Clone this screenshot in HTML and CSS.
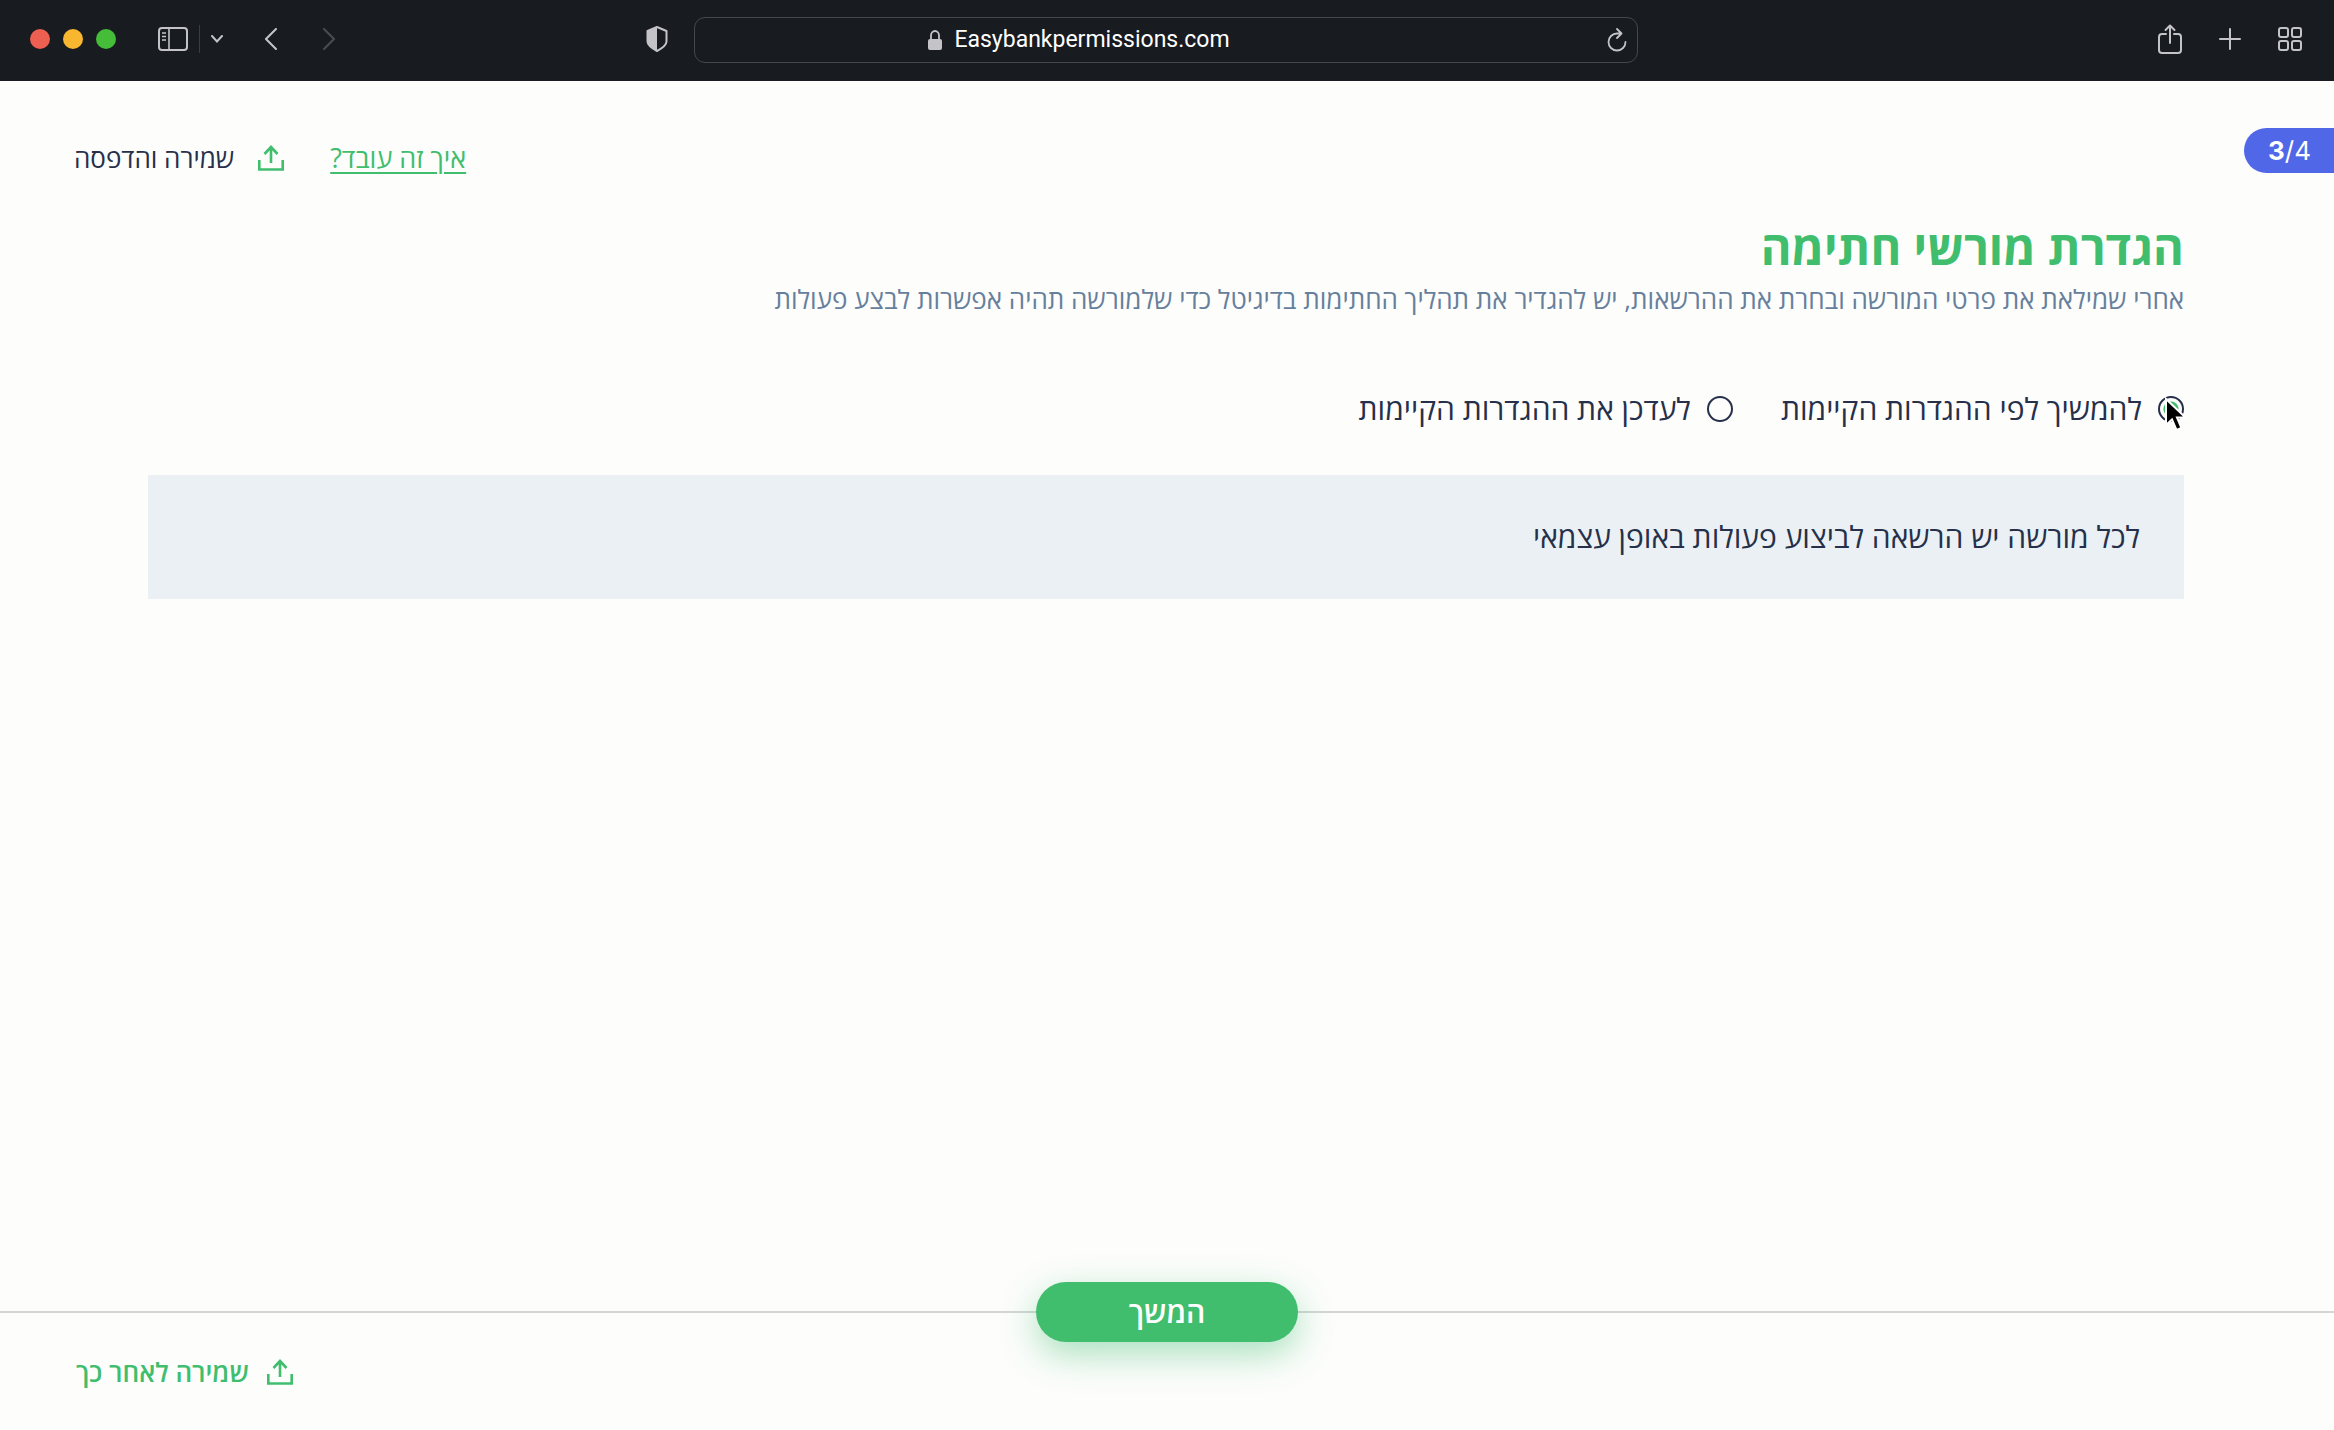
FILE: index.html
```html
<!DOCTYPE html>
<html lang="he" dir="rtl">
<head>
<meta charset="utf-8">
<meta name="viewport" content="width=device-width, initial-scale=1">
<title>הגדרת מורשי חתימה</title>
<link rel="stylesheet" href="styles.css">
</head>
<body>
<header class="browser" dir="ltr">
  <div class="browser-side">
    <div class="lights"><span class="light light-red"></span><span class="light light-yellow"></span><span class="light light-green"></span></div>
    <div class="sidebar-tools">
      <button class="tool" type="button" aria-label="Sidebar">
        <svg width="30" height="24" viewBox="0 0 30 24" fill="none" stroke="currentColor" stroke-width="2"><rect x="1" y="1" width="28" height="22" rx="3"/><path d="M11 1v22M4 6h4M4 9.500h4M4 13h4" stroke-width="1.600"/></svg>
      </button>
      <span class="divider"></span>
      <button class="tool" type="button" aria-label="Tab groups">
        <svg width="12" height="8" viewBox="0 0 12 8" fill="none" stroke="currentColor" stroke-width="2" stroke-linecap="round"><path d="M1 1l5 5.500L11 1"/></svg>
      </button>
    </div>
    <div class="history">
      <button class="tool" type="button" aria-label="Back"><svg width="12" height="22" viewBox="0 0 12 22" fill="none" stroke="currentColor" stroke-width="2" stroke-linecap="round"><path d="M11 1L1 11l10 10"/></svg></button>
      <button class="tool tool-dim" type="button" aria-label="Forward"><svg width="12" height="22" viewBox="0 0 12 22" fill="none" stroke="currentColor" stroke-width="2" stroke-linecap="round"><path d="M1 1l10 10L1 21"/></svg></button>
    </div>
    <button class="tool shield" type="button" aria-label="Privacy report">
      <svg width="22" height="26" viewBox="0 0 22 26"><path d="M11 1l9.500 4v10.500c0 3.500-4 6.500-9.500 9.500-5.500-3-9.500-6-9.500-9.500V5z" fill="none" stroke="currentColor" stroke-width="2" stroke-linejoin="round"/><path d="M11 1L1.500 5v10.500c0 3.500 4 6.500 9.500 9.500z" fill="currentColor"/></svg>
    </button>
  </div>
  <div class="address">
    <div class="address-text">
      <svg width="14" height="20" viewBox="0 0 14 20"><rect x="0" y="9" width="14" height="11" rx="2" fill="currentColor"/><path d="M3 10V5.500a4 4.500 0 0 1 8 0V10" fill="none" stroke="currentColor" stroke-width="1.800"/></svg>
      <span class="url">Easybankpermissions.com</span>
    </div>
    <button class="tool" type="button" aria-label="Reload">
      <svg width="20" height="24" viewBox="0 0 20 24" fill="none" stroke="currentColor" stroke-width="1.800" stroke-linecap="round" stroke-linejoin="round"><path d="M18.500 14a8.500 8.500 0 1 1-8.500-8.500h4M10 1l4.500 4.500L10 10"/></svg>
    </button>
  </div>
  <div class="browser-side browser-end">
    <button class="tool" type="button" aria-label="Share"><svg width="24" height="30" viewBox="0 0 24 30" fill="none" stroke="currentColor" stroke-width="2" stroke-linecap="round" stroke-linejoin="round"><path d="M8 10H4a3 3 0 0 0-3 3v13a3 3 0 0 0 3 3h16a3 3 0 0 0 3-3V13a3 3 0 0 0-3-3h-4M12 19V1.500M7.500 6L12 1.500 16.500 6"/></svg></button>
    <button class="tool" type="button" aria-label="New tab"><svg width="22" height="22" viewBox="0 0 22 22" fill="none" stroke="currentColor" stroke-width="2" stroke-linecap="round"><path d="M11 1v20M1 11h20"/></svg></button>
    <button class="tool" type="button" aria-label="All tabs"><svg width="24" height="24" viewBox="0 0 24 24" fill="none" stroke="currentColor" stroke-width="2"><rect x="1" y="1" width="9" height="9" rx="2"/><rect x="14" y="1" width="9" height="9" rx="2"/><rect x="1" y="14" width="9" height="9" rx="2"/><rect x="14" y="14" width="9" height="9" rx="2"/></svg></button>
  </div>
</header>

<div class="page-top">
  <div class="step" dir="ltr"><b>3</b>/4</div>
  <nav class="actions">
    <a class="how" href="#how">איך זה עובד?</a>
    <button class="save" type="button">
      <svg class="upload" width="26" height="26" viewBox="0 0 26 26" fill="none" stroke="currentColor" stroke-width="2.600"><path d="M1.300 15v9.500h23.400V15M13 18V2M6.500 9L13 2l6.500 7"/></svg>
      <span>שמירה והדפסה</span>
    </button>
  </nav>
</div>

<main class="content">
  <h1 class="title">הגדרת מורשי חתימה</h1>
  <p class="subtitle">אחרי שמילאת את פרטי המורשה ובחרת את ההרשאות, יש להגדיר את תהליך החתימות בדיגיטל כדי שלמורשה תהיה אפשרות לבצע פעולות</p>
  <div class="options" role="radiogroup">
    <label class="option">
      <input class="radio" type="radio" name="mode" checked>
      <span>להמשיך לפי ההגדרות הקיימות</span>
      <svg class="pointer" width="26" height="38" viewBox="0 0 26 38"><path d="M2 2v26l6-5.500 4.500 10.500 5-2-4.500-10.500h8.500z" fill="#000" stroke="#fff" stroke-width="2"/></svg>
    </label>
    <label class="option">
      <input class="radio" type="radio" name="mode">
      <span>לעדכן את ההגדרות הקיימות</span>
    </label>
  </div>
  <section class="panel">לכל מורשה יש הרשאה לביצוע פעולות באופן עצמאי</section>
</main>

<footer class="footer">
  <button class="continue" type="button">המשך</button>
  <button class="save save-later" type="button">
    <svg class="upload" width="26" height="26" viewBox="0 0 26 26" fill="none" stroke="currentColor" stroke-width="2.600"><path d="M1.300 15v9.500h23.400V15M13 18V2M6.500 9L13 2l6.500 7"/></svg>
    <span>שמירה לאחר כך</span>
  </button>
</footer>
</body>
</html>
```
FILE: styles.css
```css
* { box-sizing: border-box; }

body {
  margin: 0;
  min-height: 100vh;
  display: flex;
  flex-direction: column;
  background: #fdfdfc;
  color: #26304a;
  font-family: "Open Sans", "Noto Sans", "Liberation Sans", sans-serif;
  font-size: 26px;
  line-height: 36px;
}

button {
  padding: 0;
  border: 0;
  background: none;
  color: inherit;
  font: inherit;
  cursor: pointer;
}

svg { display: block; flex: none; }

/* Browser toolbar */
.browser {
  display: grid;
  grid-template-columns: 1fr minmax(0, 944px) 1fr;
  align-items: center;
  height: 81px;
  padding: 0 32px 2px 30px;
  background: #181b20;
  color: #c3c3c8;
}

.browser-side { display: flex; align-items: center; padding-bottom: 2px; }
.browser-end { justify-content: flex-end; gap: 37px; }
.lights { display: flex; gap: 13px; }
.light { width: 20px; height: 20px; border-radius: 50%; }
.light-red { background: #ed5f50; }
.light-yellow { background: #f9b62f; }
.light-green { background: #45bd38; }
.sidebar-tools { display: flex; align-items: center; gap: 11px; margin-left: 42px; }
.divider { width: 1px; height: 28px; background: #3a3d45; }
.history { display: flex; gap: 46px; margin-left: 42px; }
.tool-dim { color: #4b4c4e; }
.shield { margin-left: auto; margin-right: 26px; }

.address {
  display: flex;
  align-items: center;
  height: 46px;
  padding-right: 10px;
  border: 1px solid #45474f;
  border-radius: 11px;
}

.address-text {
  flex: 1;
  display: flex;
  align-items: center;
  justify-content: center;
  gap: 12px;
  padding-right: 144px;
}

.url { font-family: Roboto, sans-serif; font-size: 23px; line-height: 32px; color: #fff; }

/* Page header */
.page-top {
  display: flex;
  justify-content: space-between;
  align-items: flex-start;
  padding: 47px 0 0 74px;
}

.step {
  width: 90px;
  padding: 5px 0 4px 24px;
  border-radius: 23px 0 0 23px;
  background: #5068e8;
  color: #fff;
  font-family: Inter, sans-serif;
  font-size: 26px;
}

.actions { display: flex; align-items: center; gap: 46px; padding-top: 12px; }
.how { color: #40be6e; font-size: 27px; text-underline-offset: 4px; }
.save { display: flex; align-items: center; gap: 24px; }
.upload { color: #40be6e; }

/* Content */
.content { flex: 1; padding: 37px 150px 0 148px; }
.title { margin: 0; color: #40be6e; font-size: 47px; line-height: 68px; font-weight: 700; }
.subtitle { margin: 0; color: #66809c; }

.options { display: flex; gap: 48px; margin-top: 74px; font-size: 30px; }
.option { position: relative; display: flex; align-items: center; gap: 16px; }

.radio {
  appearance: none;
  width: 26px;
  height: 26px;
  margin: 0;
  border: 2px solid #26304a;
  border-radius: 50%;
}

.radio:checked { background: radial-gradient(circle, #40be6e 7px, transparent 8px); }
.pointer { position: absolute; top: 6px; right: -6px; }

.panel {
  margin-top: 48px;
  padding: 44px;
  background: #eaf0f4;
  font-size: 30px;
}

/* Footer */
.footer {
  display: flex;
  flex-direction: column;
  align-items: center;
  padding: 0 76px 40px;
  border-top: 2px solid #d5d5d7;
}

.continue {
  width: 262px;
  height: 60px;
  margin-top: -31px;
  border-radius: 30px;
  background: #40be6e;
  box-shadow: 0 12px 36px rgba(64, 190, 110, 0.45);
  color: #fff;
  font-size: 30px;
  font-weight: 600;
}

.save-later { align-self: flex-end; gap: 18px; margin-top: 12px; color: #40be6e; font-weight: 600; }
```
